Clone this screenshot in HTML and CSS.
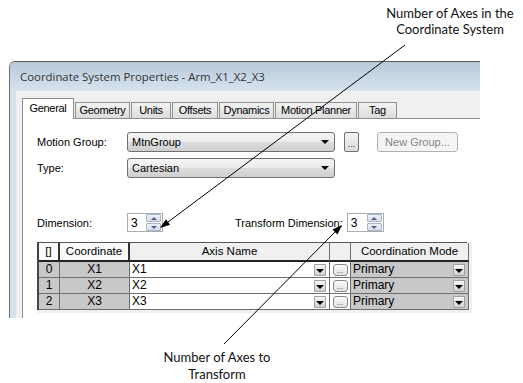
FILE: index.html
```html
<html lang="en">
<head>
    <meta charset="UTF-8">
    <title>Coordinate System Properties</title>
    <link rel="stylesheet" href="styles.css">
</head>
<body>
    <div class="note-top">Number of Axes in the<br>Coordinate System</div>

    <div class="window">
        <div class="titlebar">Coordinate System Properties - Arm_X1_X2_X3</div>
        <div class="frame">
            <div class="client">
                <div class="tabs">
                    <div class="tab active" style="width: 52px">General</div>
                    <div class="tab" style="width: 55px">Geometry</div>
                    <div class="tab" style="width: 40px">Units</div>
                    <div class="tab" style="width: 46px">Offsets</div>
                    <div class="tab" style="width: 55px">Dynamics</div>
                    <div class="tab" style="width: 82px">Motion Planner</div>
                    <div class="tab" style="width: 39px">Tag</div>
                </div>
                <div class="panel">
                    <div class="row">
                        <div class="label">Motion Group:</div>
                        <div class="combo"><span>MtnGroup</span><span class="arrow"></span></div>
                        <div class="dots-btn">...</div>
                        <div class="new-btn">New Group...</div>
                    </div>
                    <div class="row second">
                        <div class="label">Type:</div>
                        <div class="combo"><span>Cartesian</span><span class="arrow"></span></div>
                    </div>

                    <div class="row dim-row">
                        <div class="label">Dimension:</div>
                        <div class="spin">
                            <span>3</span>
                            <div class="spin-btns"><div class="up"></div><div class="down"></div></div>
                        </div>
                        <div class="label trans-label">Transform Dimension:</div>
                        <div class="spin wide">
                            <span>3</span>
                            <div class="spin-btns"><div class="up"></div><div class="down"></div></div>
                        </div>
                    </div>

                    <div class="grid-box">
                        <div class="grid">
                            <div class="hd idx">[]</div>
                            <div class="hd">Coordinate</div>
                            <div class="hd">Axis Name</div>
                            <div class="hd"></div>
                            <div class="hd">Coordination Mode</div>

                            <div class="cell gray">0</div>
                            <div class="cell gray">X1</div>
                            <div class="cell left"><span>X1</span><span class="drop"></span></div>
                            <div class="cell btn-cell"><span class="mini">...</span></div>
                            <div class="cell gray left"><span>Primary</span><span class="drop"></span></div>

                            <div class="cell gray">1</div>
                            <div class="cell gray">X2</div>
                            <div class="cell left"><span>X2</span><span class="drop"></span></div>
                            <div class="cell btn-cell"><span class="mini">...</span></div>
                            <div class="cell gray left"><span>Primary</span><span class="drop"></span></div>

                            <div class="cell gray">2</div>
                            <div class="cell gray">X3</div>
                            <div class="cell left"><span>X3</span><span class="drop"></span></div>
                            <div class="cell btn-cell"><span class="mini">...</span></div>
                            <div class="cell gray left"><span>Primary</span><span class="drop"></span></div>
                        </div>
                    </div>
                </div>
            </div>
        </div>
    </div>

    <div class="note-bottom">Number of Axes to<br>Transform</div>

    <svg class="arrows" width="523" height="383" viewBox="0 0 523 383">
        <line x1="405" y1="45" x2="168" y2="222" stroke="#000" stroke-width="1"/>
        <polygon points="160,228 170.1,224.8 165.9,219.2" fill="#000"/>
        <line x1="224" y1="344" x2="335" y2="232" stroke="#000" stroke-width="1"/>
        <polygon points="342,225 337.5,234.6 332.5,229.6" fill="#000"/>
    </svg>
</body>
</html>
```

FILE: styles.css
```css
body {
    margin: 0;
    width: 523px;
    height: 383px;
    position: relative;
    overflow: hidden;
    background: #fff;
    font-family: "Liberation Sans", Arial, sans-serif;
    font-size: 11px;
    color: #000;
}
.note-top {
    box-sizing: border-box;
    height: 61px;
    width: 140px;
    margin-left: 380px;
    padding-top: 5px;
    text-align: center;
    font-family: Lato, sans-serif;
    font-size: 13px;
    line-height: 16px;
    color: #111;
}
.note-bottom {
    width: 140px;
    margin: 31px 0 0 147px;
    text-align: center;
    font-family: Lato, sans-serif;
    font-size: 13px;
    line-height: 17px;
    color: #111;
}
.window {
    margin-left: 9px;
    width: 471px;
    height: 257px;
    border-top: 1px solid #5a5a5a;
    border-left: 1px solid #6e6e6e;
    border-top-left-radius: 6px;
    overflow: hidden;
    box-sizing: border-box;
}
.titlebar {
    height: 29px;
    line-height: 29px;
    padding-left: 10px;
    background: linear-gradient(#b9c9d9, #d6e3ef);
    font-family: "Open Sans", sans-serif;
    font-size: 11.4px;
    color: #333;
    white-space: nowrap;
}
.frame {
    background: #d6e3ef;
    padding-left: 6px;
    height: 228px;
}
.client {
    background: #f0f0f0;
    padding-left: 6px;
    height: 228px;
}
.tabs {
    height: 27px;
    display: flex;
    align-items: flex-end;
}
.tab {
    box-sizing: border-box;
    height: 16px;
    margin-left: 1px;
    border: 1px solid #8e8f8f;
    border-bottom: none;
    background: linear-gradient(#f3f3f3, #dcdcdc);
    text-align: center;
    line-height: 15px;
    letter-spacing: -0.3px;
    white-space: nowrap;
}
.tab.active {
    height: 21px;
    margin-left: 0;
    margin-bottom: -1px;
    background: #fff;
    position: relative;
    line-height: 18px;
}
.panel {
    background: #fff;
    border-top: 1px solid #8e8f8f;
    border-left: 1px solid #8e8f8f;
    padding: 13px 0 0 14px;
    height: 200px;
}
.row {
    display: flex;
    align-items: center;
    height: 20px;
}
.row.second {
    margin-top: 6px;
}
.row.dim-row {
    margin-top: 35px;
    height: 19px;
}
.label {
    width: 90px;
    white-space: nowrap;
}
.combo {
    box-sizing: border-box;
    width: 208px;
    height: 20px;
    border: 1px solid #707070;
    border-radius: 3px;
    background: linear-gradient(#f4f4f4 0%, #ebebeb 50%, #dddddd 51%, #cfcfcf 100%);
    display: flex;
    align-items: center;
    justify-content: space-between;
    padding: 0 4px 0 4px;
}
.arrow {
    width: 0;
    height: 0;
    border-left: 4px solid transparent;
    border-right: 4px solid transparent;
    border-top: 4px solid #000;
    margin-right: 1px;
}
.dots-btn {
    box-sizing: border-box;
    margin-left: 9px;
    width: 15px;
    height: 20px;
    border: 1px solid #707070;
    border-radius: 2px;
    background: linear-gradient(#f4f4f4, #dcdcdc);
    text-align: center;
    line-height: 22px;
    font-size: 9px;
    color: #333;
}
.new-btn {
    box-sizing: border-box;
    margin-left: 18px;
    width: 81px;
    height: 20px;
    border: 1px solid #adb2b5;
    border-radius: 3px;
    background: #f4f4f4;
    color: #838383;
    text-align: center;
    line-height: 18px;
}
.spin {
    box-sizing: border-box;
    width: 36px;
    height: 19px;
    border: 1px solid #abadb3;
    display: flex;
    align-items: center;
    justify-content: space-between;
    padding-left: 3px;
    font-size: 12px;
}
.spin.wide {
    width: 37px;
}
.trans-label {
    width: auto;
    margin-left: 72px;
    margin-right: 4px;
}
.spin-btns {
    width: 15px;
    display: flex;
    flex-direction: column;
    gap: 1px;
    margin-right: 1px;
}
.spin-btns div {
    box-sizing: border-box;
    height: 8px;
    border: 1px solid #a7b4c8;
    border-radius: 1px;
    background: linear-gradient(#eef2f8, #d5deeb);
    display: flex;
    align-items: center;
    justify-content: center;
}
.spin-btns .up::after {
    content: "";
    border-left: 3px solid transparent;
    border-right: 3px solid transparent;
    border-bottom: 3px solid #4d6185;
}
.spin-btns .down::after {
    content: "";
    border-left: 3px solid transparent;
    border-right: 3px solid transparent;
    border-top: 3px solid #4d6185;
}
.grid-box {
    margin-top: 10px;
    width: 435px;
    height: 71px;
    background: #f0f0f0;
}
.grid {
    display: grid;
    grid-template-columns: 21px 70px 200px 21px 118px;
    grid-template-rows: 19px 16px 16px 16px;
    width: 430px;
    box-sizing: border-box;
    border-top: 1px solid #555;
    border-left: 2px solid #444;
}
.hd {
    box-sizing: border-box;
    background: #f0f0f0;
    border-right: 1px solid #6e6e6e;
    border-bottom: 2px solid #222;
    text-align: center;
    line-height: 17px;
    font-size: 11.5px;
}
.hd.idx {
    background: #fafafa;
    border-right: 2px solid #333;
}
.grid .hd:nth-child(2) {
    background: #fafafa;
    border-right: 2px solid #333;
}
.cell {
    box-sizing: border-box;
    border-right: 1px solid #6e6e6e;
    border-bottom: 1px solid #6e6e6e;
    text-align: center;
    line-height: 15px;
    font-size: 12px;
    background: #fff;
}
.cell.gray {
    background: #c8c8c8;
}
.cell.left {
    text-align: left;
    display: flex;
    align-items: center;
    justify-content: space-between;
    padding: 0 3px 0 2px;
}
.drop {
    box-sizing: border-box;
    width: 12px;
    height: 12px;
    border: 1px solid #a0a0a0;
    border-radius: 1px;
    background: linear-gradient(#f6f6f6, #d2d2d2);
    display: flex;
    align-items: center;
    justify-content: center;
    padding-top: 3px;
}
.drop::after {
    content: "";
    border-left: 4px solid transparent;
    border-right: 4px solid transparent;
    border-top: 4px solid #000;
}
.btn-cell {
    display: flex;
    align-items: center;
    justify-content: center;
}
.mini {
    box-sizing: border-box;
    width: 15px;
    height: 12px;
    border: 1px solid #8a8a8a;
    border-radius: 3px;
    background: linear-gradient(#fafafa, #e2e2e2);
    font-size: 8px;
    line-height: 12px;
    color: #444;
}
.arrows {
    position: absolute;
    left: 0;
    top: 0;
    pointer-events: none;
}
```
